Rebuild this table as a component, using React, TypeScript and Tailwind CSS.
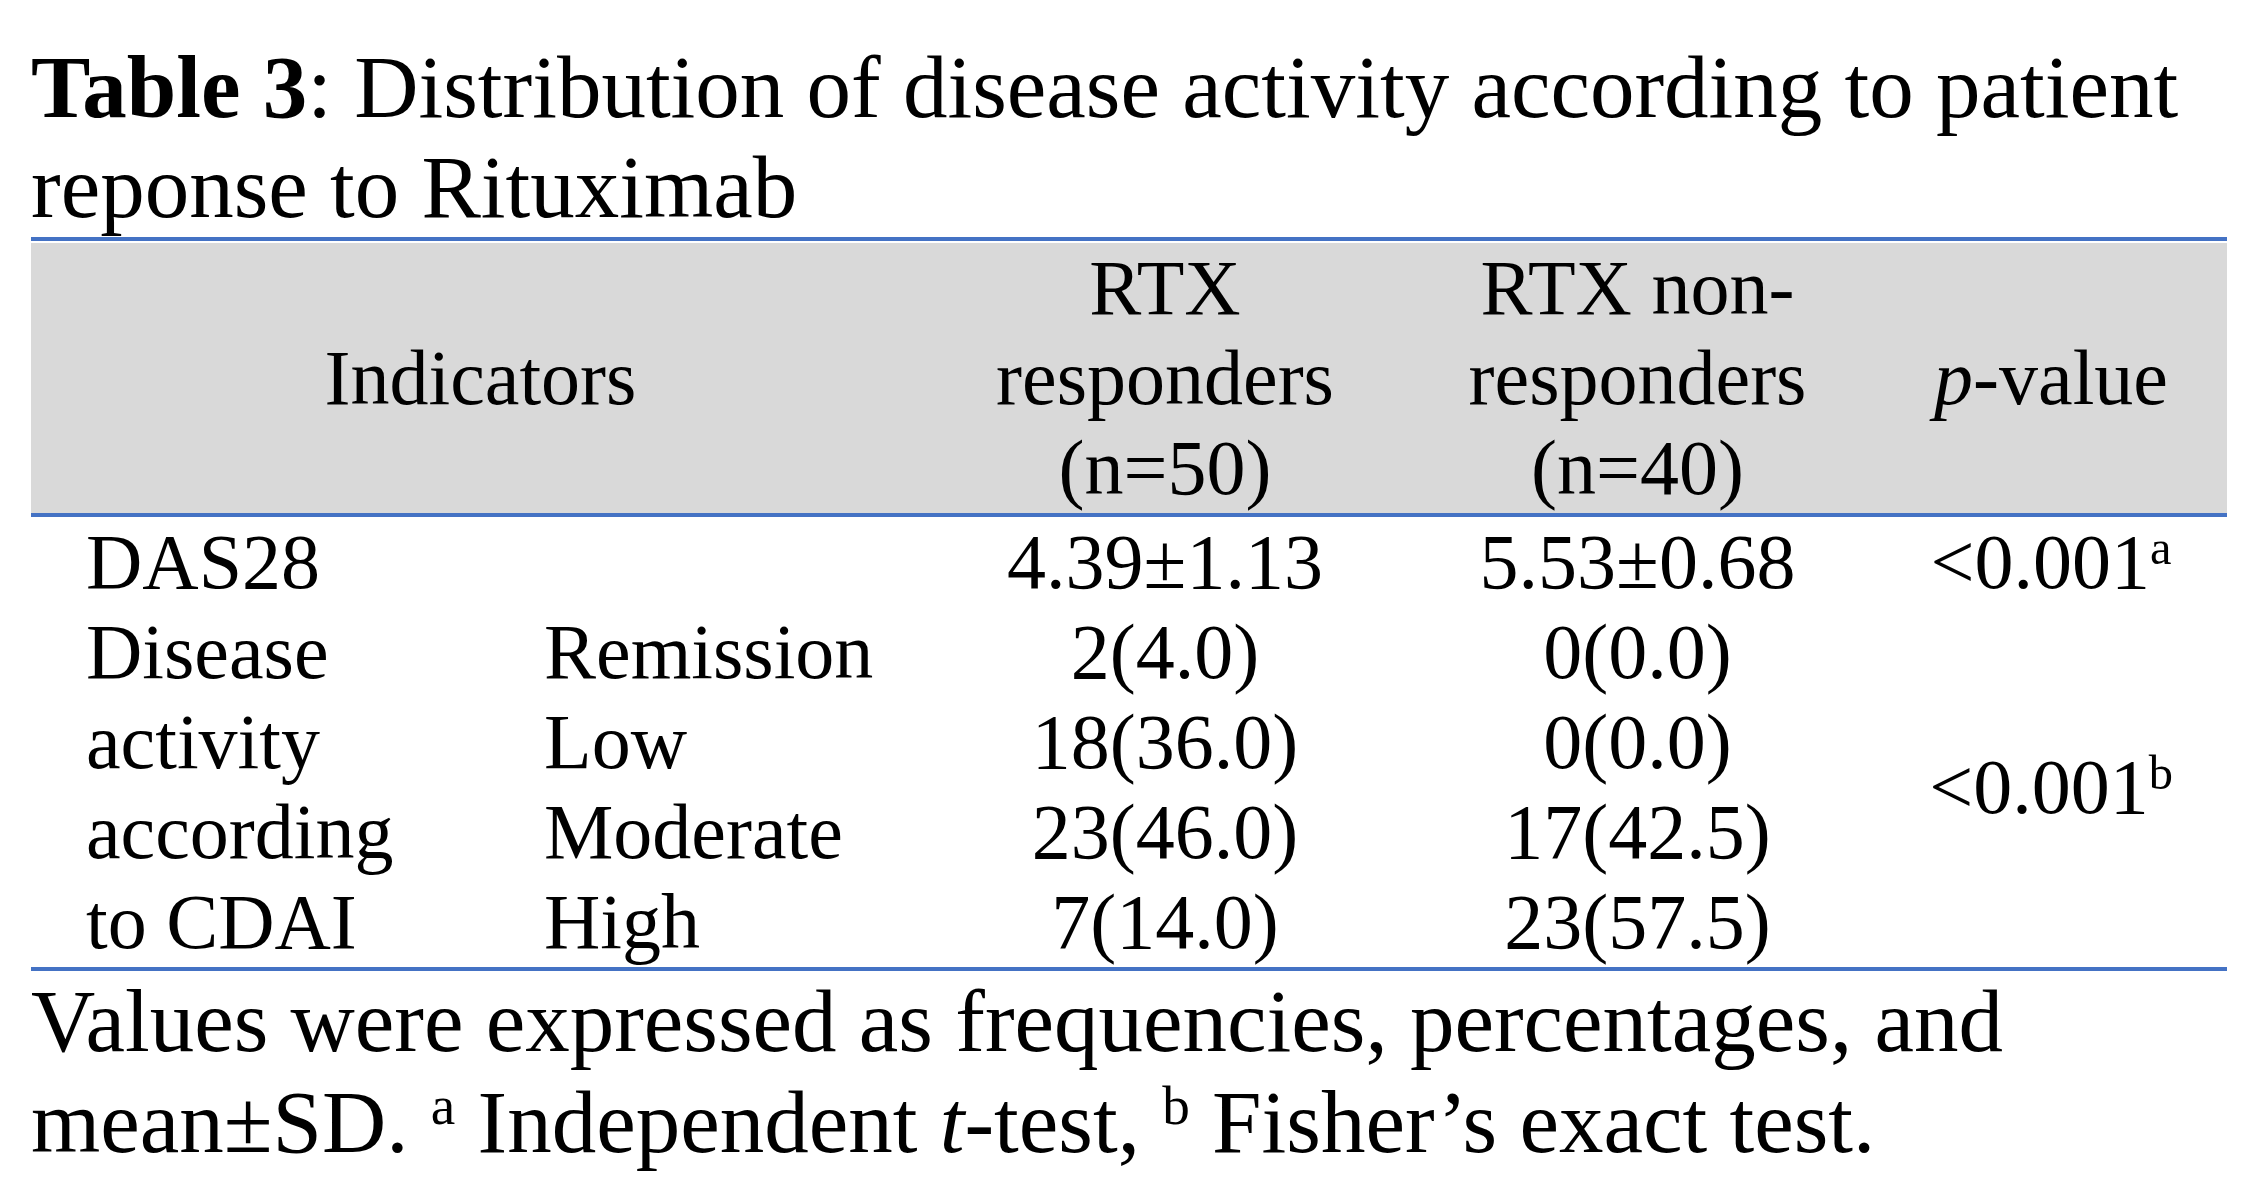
const rows = [
  { label: "Remission", a: "2(4.0)", b: "0(0.0)" },
  { label: "Low", a: "18(36.0)", b: "0(0.0)" },
  { label: "Moderate", a: "23(46.0)", b: "17(42.5)" },
  { label: "High", a: "7(14.0)", b: "23(57.5)" },
];

export default function App() {
  return (
    <div className="min-h-screen bg-white pl-[31px] pt-[37px] font-['Liberation_Serif','Times_New_Roman',serif] text-black">
      <p className="text-[89px] leading-[100px]">
        <span className="font-bold">Table 3</span>: Distribution of disease activity according to patient
        <br />
        reponse to Rituximab
      </p>

      <div className="w-[2196px] border-t-4 border-[#4472c4] pt-[2px]">
        <table className="w-[2196px] table-fixed border-collapse text-[78px] leading-[90px]">
          <colgroup>
            <col className="w-[458px]" />
            <col className="w-[441px]" />
            <col className="w-[470px]" />
            <col className="w-[475px]" />
            <col className="w-[352px]" />
          </colgroup>
          <thead>
            <tr className="h-[270px] border-b-4 border-[#4472c4] bg-[#d9d9d9]">
              <th colSpan={2} className="p-0 text-center align-middle font-normal">
                Indicators
              </th>
              <th className="p-0 text-center align-middle font-normal">
                RTX
                <br />
                responders
                <br />
                (n=50)
              </th>
              <th className="p-0 text-center align-middle font-normal">
                RTX non-
                <br />
                responders
                <br />
                (n=40)
              </th>
              <th className="p-0 text-center align-middle font-normal">
                <i>p</i>-value
              </th>
            </tr>
          </thead>
          <tbody className="border-b-4 border-[#4472c4]">
            <tr className="h-[90px]">
              <td className="p-0 pl-[55px] align-top">DAS28</td>
              <td className="p-0" />
              <td className="p-0 text-center align-top">4.39±1.13</td>
              <td className="p-0 text-center align-top">5.53±0.68</td>
              <td className="p-0 text-center align-top">
                &lt;0.001<sup className="text-[0.62em]">a</sup>
              </td>
            </tr>
            {rows.map((row, i) => (
              <tr key={row.label} className="h-[90px]">
                {i === 0 && (
                  <td rowSpan={4} className="p-0 pl-[55px] align-top">
                    Disease
                    <br />
                    activity
                    <br />
                    according
                    <br />
                    to CDAI
                  </td>
                )}
                <td className="p-0 pl-[55px] align-top">{row.label}</td>
                <td className="p-0 text-center align-top">{row.a}</td>
                <td className="p-0 text-center align-top">{row.b}</td>
                {i === 0 && (
                  <td rowSpan={4} className="p-0 text-center align-middle">
                    &lt;0.001<sup className="text-[0.62em]">b</sup>
                  </td>
                )}
              </tr>
            ))}
          </tbody>
        </table>
      </div>

      <p className="text-[89px] leading-[101px]">
        Values were expressed as frequencies, percentages, and
        <br />
        mean±SD. <sup className="text-[0.62em]">a</sup> Independent <i>t</i>-test,{" "}
        <sup className="text-[0.62em]">b</sup> Fisher’s exact test.
      </p>
    </div>
  );
}
